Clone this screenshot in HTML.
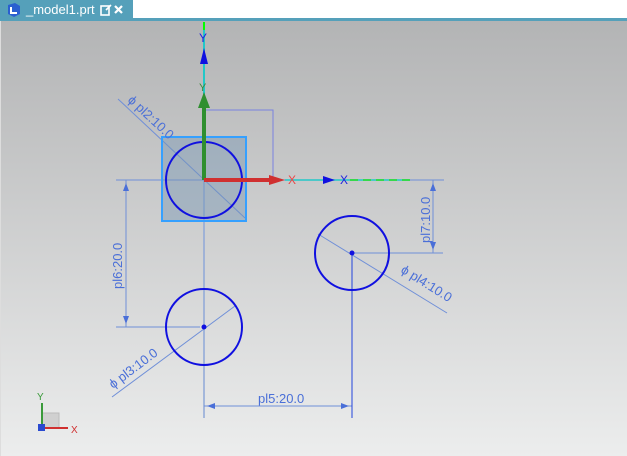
<!DOCTYPE html>
<html><head><meta charset="utf-8"><style>
html,body{margin:0;padding:0;width:627px;height:456px;overflow:hidden;font-family:"Liberation Sans",sans-serif}
#bar{position:absolute;left:0;top:0;width:627px;height:21px;background:#fff;border-bottom:3px solid #55a0ba;box-sizing:border-box}
#tab{position:absolute;left:0;top:0;width:133px;height:21px;background:#55a0ba;color:#fff;font-size:13px;line-height:20px}
#vp{position:absolute;left:0;top:21px;width:627px;height:435px;background:linear-gradient(#b3b4b5,#eceded);border-left:1px solid #ddd;box-sizing:border-box}
svg{position:absolute;left:0;top:0}
</style></head><body>
<div id="bar"><div id="tab">
<svg width="20" height="20" style="left:5px;top:1px"><path d="M3 4 L10 2 L15 5 L15 13 L9 16 L3 13Z" fill="#2a5fd0"/><path d="M6 6 L6 12 L12 12" stroke="#fff" stroke-width="2" fill="none"/></svg>
<span style="position:absolute;left:26px;top:0">_model1.prt</span>
<svg width="30" height="20" style="left:98px;top:1px"><rect x="3" y="5" width="8" height="9" fill="none" stroke="#fff" stroke-width="1.6"/><path d="M8 9 L13 4" stroke="#fff" stroke-width="1.6"/><path d="M17 5 L24 12 M24 5 L17 12" stroke="#fff" stroke-width="2.2"/></svg>
</div></div>
<div id="vp"></div>
<svg width="627" height="456" viewBox="0 0 627 456">
<g fill="none" stroke="#6f8fd8" stroke-width="1">
<line x1="204" y1="180" x2="204" y2="418" stroke="#8fa8d8" stroke-width="1.5"/>
<line x1="116" y1="180" x2="444" y2="180"/>
<polyline points="204,110 273,110 273,180" stroke="#7a82e0"/>
<line x1="126" y1="180" x2="126" y2="327"/>
<line x1="116" y1="327" x2="200" y2="327"/>
<line x1="433" y1="180" x2="433" y2="253"/>
<line x1="352" y1="253" x2="443" y2="253"/>
<line x1="204" y1="406" x2="352" y2="406"/>
<line x1="352" y1="253" x2="352" y2="418" stroke="#2244dd"/>
<line x1="118" y1="99" x2="245" y2="218"/>
<line x1="112" y1="397" x2="235" y2="306"/>
<line x1="318" y1="234" x2="447" y2="313"/>
</g>
<g fill="#4a6fd8">
<path d="M126 183 l-3 8 h6z M126 324 l-3 -8 h6z M433 183 l-3 8 h6z M433 250 l-3 -8 h6z M207 406 l8 -3 v6z M349 406 l-8 -3 v6z"/>
</g>
<rect x="162" y="137" width="84" height="84" fill="rgba(120,150,180,0.45)" stroke="#35a0ff" stroke-width="2"/>
<g fill="none" stroke="#1010e0" stroke-width="2">
<circle cx="204" cy="180" r="38"/><circle cx="204" cy="327" r="38"/><circle cx="352" cy="253" r="37"/>
</g>
<circle cx="204" cy="327" r="2.5" fill="#1010e0"/><circle cx="352" cy="253" r="2.5" fill="#1010e0"/>
<line x1="204" y1="25" x2="204" y2="180" stroke="#22c8c8" stroke-width="2"/>
<line x1="204" y1="22" x2="204" y2="30" stroke="#00ff00" stroke-width="2"/>
<path d="M204 48 l-4 16 h8z" fill="#1010e0"/>
<line x1="204" y1="180" x2="204" y2="105" stroke="#2f8f2f" stroke-width="4"/>
<path d="M204 92 l-6 16 h12z" fill="#2f8f2f"/>
<line x1="204" y1="180" x2="270" y2="180" stroke="#d03030" stroke-width="4"/>
<path d="M285 180 l-16 -5 v10z" fill="#d03030"/>
<line x1="285" y1="180" x2="410" y2="180" stroke="#22c8c8" stroke-width="1.5"/>
<line x1="350" y1="180" x2="412" y2="180" stroke="#22dd22" stroke-width="1.5" stroke-dasharray="8,5"/>
<path d="M335 180 l-12 -4 v8z" fill="#1010e0"/>
<g font-size="12" fill="#ee4444"><text x="288" y="184">X</text></g>
<g font-size="12" fill="#2020e0"><text x="340" y="184">X</text><text x="199" y="42">Y</text></g>
<text x="199" y="91" font-size="11" fill="#3a8a3a">Y</text>
<g font-size="13" fill="#4a6fd8" font-family="Liberation Sans, sans-serif">
<text transform="translate(127,101) rotate(43)">ϕ pl2:10.0</text>
<text transform="translate(113,389) rotate(-37)">ϕ pl3:10.0</text>
<text transform="translate(400,272) rotate(32)">ϕ pl4:10.0</text>
<text transform="translate(122,289) rotate(-90)">pl6:20.0</text>
<text transform="translate(430,243) rotate(-90)">pl7:10.0</text>
<text x="258" y="403">pl5:20.0</text>
</g>
<rect x="42" y="413" width="17" height="15" fill="#d0d0d0" stroke="#bbb"/>
<line x1="42" y1="428" x2="42" y2="403" stroke="#3a9a3a" stroke-width="2"/>
<line x1="42" y1="428" x2="68" y2="428" stroke="#d03030" stroke-width="2"/>
<rect x="38" y="424" width="7" height="7" fill="#2a4ad0"/>
<text x="37" y="400" font-size="10" fill="#3a9a3a">Y</text>
<text x="71" y="433" font-size="10" fill="#d03030">X</text>
</svg>
</body></html>
